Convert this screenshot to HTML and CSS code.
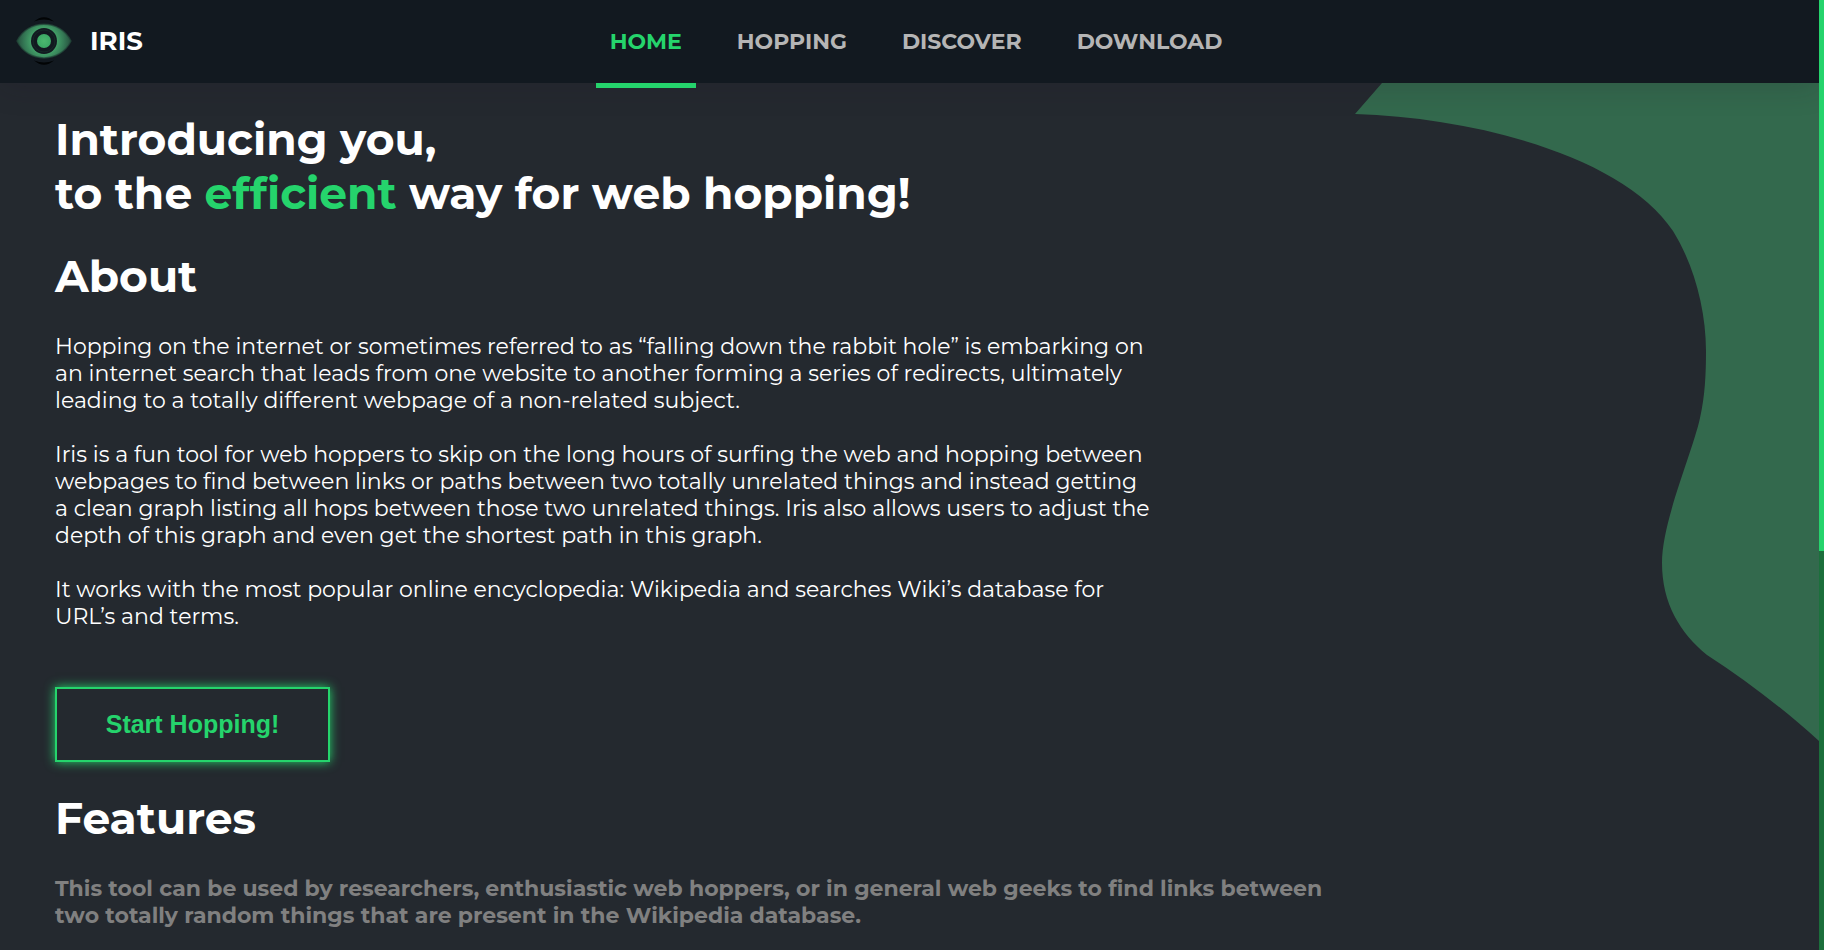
FILE: index.html
```html
<!DOCTYPE html>
<html lang="en">
<head>
<meta charset="utf-8">
<title>IRIS</title>
<link rel="stylesheet" href="styles.css">
</head>
<body>
<div class="page">
  <header class="topbar">
    <a class="brand" href="#">
      <svg class="logo" viewBox="0 0 56 48" aria-hidden="true">
        <defs>
          <radialGradient id="eye" gradientUnits="userSpaceOnUse" cx="28" cy="24" r="28">
            <stop offset="0.4" stop-color="#46a86c"/>
            <stop offset="0.7" stop-color="#357b56"/>
            <stop offset="1" stop-color="#24493b"/>
          </radialGradient>
          <radialGradient id="pupil">
            <stop offset="0" stop-color="#4cb86f"/>
            <stop offset="1" stop-color="#3ba965"/>
          </radialGradient>
        </defs>
        <path d="M18 4.500Q28 -4 38 4.500Q28 .5 18 4.500ZM18 43.500Q28 52 38 43.500Q28 47.500 18 43.500Z" fill="#020405"/>
        <path d="M1 24C12 1.500 44 1.500 55 24C44 46.500 12 46.500 1 24Z" fill="url(#eye)" stroke="#24493b" stroke-opacity=".7" stroke-width="1.500"/>
        <circle cx="28" cy="24" r="13" fill="#121920"/>
        <circle cx="28" cy="24" r="11" fill="none" stroke="#152a27" stroke-width="1"/>
        <circle cx="28" cy="24" r="7" fill="url(#pupil)"/>
      </svg>
      <span>IRIS</span>
    </a>
    <nav class="menu">
      <a class="active" href="#">HOME</a>
      <a href="#">HOPPING</a>
      <a href="#">DISCOVER</a>
      <a href="#">DOWNLOAD</a>
    </nav>
  </header>
  <main class="content">
    <svg class="blob" viewBox="0 0 464 658" aria-hidden="true">
      <path d="M27 0L0 31C125 35 270 75 318 148C338 180 351 225 351 268C351 291 350 313 345 335C337 371 307 438 307 480C307 520 325 550 352 572C392 598 430 627 464 658V0Z" fill="#33694d"/>
    </svg>
    <h1>Introducing you,<br>to the <em>efficient</em> way for web hopping!</h1>
    <section>
      <h2>About</h2>
      <p>Hopping on the internet or sometimes referred to as “falling down the rabbit hole” is embarking on<br>an internet search that leads from one website to another forming a series of redirects, ultimately<br>leading to a totally different webpage of a non-related subject.</p>
      <p>Iris is a fun tool for web hoppers to skip on the long hours of surfing the web and hopping between<br>webpages to find between links or paths between two totally unrelated things and instead getting<br>a clean graph listing all hops between those two unrelated things. Iris also allows users to adjust the<br>depth of this graph and even get the shortest path in this graph.</p>
      <p>It works with the most popular online encyclopedia: Wikipedia and searches Wiki’s database for<br>URL’s and terms.</p>
      <button class="start" type="button">Start Hopping!</button>
    </section>
    <section>
      <h2>Features</h2>
      <p class="note">This tool can be used by researchers, enthusiastic web hoppers, or in general web geeks to find links between<br>two totally random things that are present in the Wikipedia database.</p>
    </section>
  </main>
</div>
<div class="scroll-track"><div class="scroll-thumb"></div></div>
</body>
</html>
```

FILE: styles.css
```css
* {
  box-sizing: border-box;
}

body {
  margin: 0;
  height: 100vh;
  overflow: hidden;
  display: grid;
  grid-template-columns: 1fr 5px;
  background: #24292f;
  color: #fff;
  font-family: Montserrat, Inter, sans-serif;
  font-size: 22px;
  font-variant-ligatures: none;
  line-height: 27px;
}

.page {
  min-width: 0;
  height: 100vh;
  overflow: hidden;
}

.topbar {
  position: relative;
  z-index: 1;
  display: grid;
  grid-template-columns: 1fr auto 1fr;
  grid-template-rows: 83px;
  height: 83px;
  padding: 0 3px 0 16px;
  background: #121920;
  box-shadow: 0 4px 30px rgba(36, 20, 40, 0.2);
}

.brand {
  display: flex;
  align-items: center;
  gap: 18px;
  padding-bottom: 1px;
  color: #fff;
  font-size: 26px;
  font-weight: 700;
  text-decoration: none;
}

.logo {
  width: 56px;
  height: 48px;
}

.menu {
  display: flex;
  gap: 27px;
}

.menu a {
  display: flex;
  align-items: center;
  height: 88px;
  padding: 0 14px 5px;
  color: #b5b5b5;
  font-size: 22px;
  font-weight: 700;
  text-decoration: none;
}

.menu .active {
  padding-bottom: 0;
  border-bottom: 5px solid #25d46c;
  color: #25d46c;
}

.content {
  position: relative;
  padding: 29px 55px;
}

.blob {
  position: absolute;
  top: 0;
  right: 0;
  width: 464px;
  height: 658px;
}

h1,
h2 {
  margin: 0;
  font-size: 44px;
  font-weight: 700;
  line-height: 54px;
}

h1 {
  margin-bottom: 29px;
}

h1 em {
  color: #25d46c;
  font-style: normal;
}

h2 {
  margin-bottom: 30px;
}

p {
  margin: 0 0 27px;
}

.start {
  display: block;
  width: 275px;
  height: 75px;
  margin: 57px 0 29px;
  border: 2px solid #25d46c;
  background: transparent;
  box-shadow: 0 0 10px #25d46c;
  color: #25d46c;
  font: 700 25px "Liberation Sans", Arial, sans-serif;
}

.note {
  color: #808080;
  font-weight: 700;
}

.scroll-track {
  height: 100vh;
  background: #1c6f3c;
}

.scroll-thumb {
  height: 58%;
  background: #25d46c;
}
```
